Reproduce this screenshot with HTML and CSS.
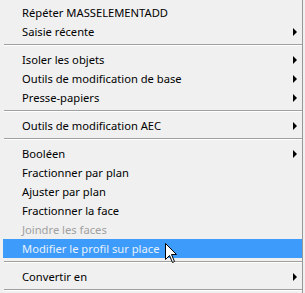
FILE: index.html
```html
<!DOCTYPE html>
<html>
<head>
  <title>Menu contextuel</title>
  <link rel="stylesheet" href="styles.css">
</head>
<body>
  <div class="menu">
    <div class="item">Répéter MASSELEMENTADD</div>
    <div class="item sub">Saisie récente</div>
    <div class="sep"></div>
    <div class="item sub">Isoler les objets</div>
    <div class="item sub">Outils de modification de base</div>
    <div class="item sub">Presse-papiers</div>
    <div class="sep"></div>
    <div class="item sub">Outils de modification AEC</div>
    <div class="sep"></div>
    <div class="item sub">Booléen</div>
    <div class="item">Fractionner par plan</div>
    <div class="item">Ajuster par plan</div>
    <div class="item">Fractionner la face</div>
    <div class="item disabled">Joindre les faces</div>
    <div class="item active">Modifier le profil sur place</div>
    <div class="sep"></div>
    <div class="item sub">Convertir en</div>
    <div class="sep"></div>
  </div>

  <svg class="cursor" width="13" height="20" viewBox="0 0 13 20">
    <path d="M0.5 0.5 L0.5 16.5 L4.5 12.5 L7.5 19.5 L9.5 18.5 L6.5 11.5 L11.5 11.5 Z" fill="#fff" stroke="#000" stroke-width="1" stroke-linejoin="miter"/>
  </svg>
</body>
</html>
```

FILE: styles.css
```css
body {
  margin: 0;
  padding: 0;
  background-color: #f0f0f0;
  font-family: "Noto Sans", "Open Sans", sans-serif;
  font-size: 11.2px;
  color: #000;
  overflow: hidden;
}
.menu {
  width: 299px;
  height: 293px;
  padding: 3px 0 0 3px;
  border-right: 1px solid #979797;
  box-sizing: content-box;
}
.item {
  position: relative;
  height: 19px;
  line-height: 19px;
  padding-left: 19px;
  white-space: nowrap;
}
.item.sub::after {
  content: "";
  position: absolute;
  right: 5px;
  top: 6px;
  border-left: 4px solid #000;
  border-top: 4px solid transparent;
  border-bottom: 4px solid transparent;
}
.item.disabled {
  color: #a0a0a0;
}
.item.active {
  background-color: #3c9bfb;
  color: #e6f1fd;
}
.sep {
  height: 9px;
  box-sizing: border-box;
  padding-top: 3px;
  margin-left: 1px;
}
.sep::before {
  content: "";
  display: block;
  height: 1px;
  background-color: #a0a0a0;
  border-bottom: 1px solid #fff;
}
.cursor {
  position: absolute;
  left: 165px;
  top: 243px;
}
```
